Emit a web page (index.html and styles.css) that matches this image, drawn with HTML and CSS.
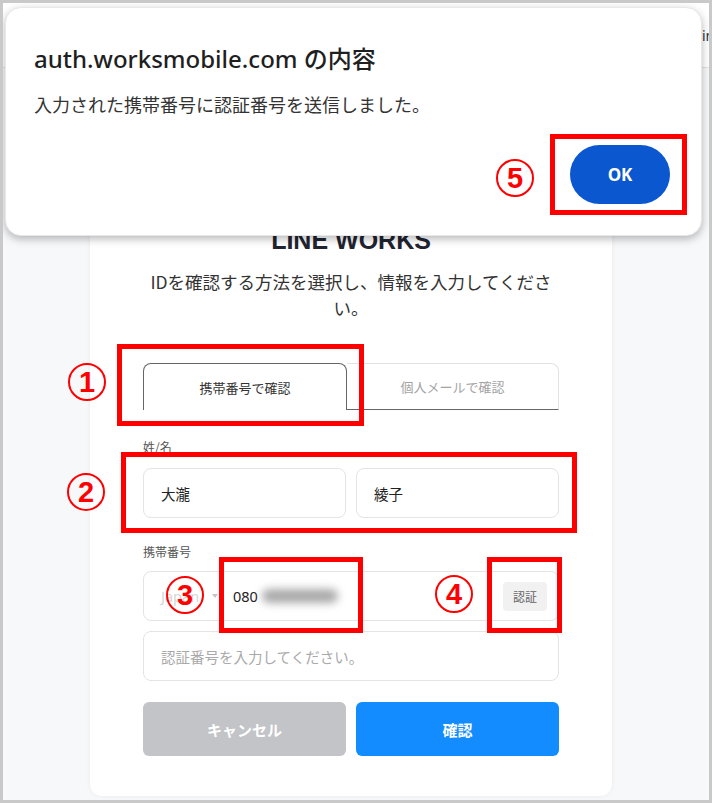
FILE: index.html
```html
<!DOCTYPE html>
<html lang="ja">

<head>
    <meta charset="UTF-8">
    <meta name="viewport" content="width=device-width, initial-scale=1.0">
    <title>LINE WORKS - ID確認</title>
    <link rel="stylesheet" href="styles.css">
</head>

<body>
    <div class="frame">
        <header class="topbar">
            <span class="topbar-link">information</span>
        </header>

        <main class="main">
            <section class="card">
                <h1 class="logo">LINE WORKS</h1>
                <p class="lead">IDを確認する方法を選択し、情報を入力してください。</p>

                <div class="tabs">
                    <button class="tab tab-active">携帯番号で確認</button>
                    <button class="tab">個人メールで確認</button>
                </div>

                <div class="field field-name">
                    <div class="field-label">姓/名</div>
                    <div class="row">
                        <div class="input">大瀧</div>
                        <div class="input">綾子</div>
                    </div>
                </div>

                <div class="field field-phone">
                    <div class="field-label">携帯番号</div>
                    <div class="input phone">
                        <span class="country">Japan<span class="caret"></span></span>
                        <span class="number">080<span class="blur"></span></span>
                        <span class="verify-btn">認証</span>
                    </div>
                    <div class="input placeholder">認証番号を入力してください。</div>
                </div>

                <div class="actions">
                    <button class="btn btn-cancel">キャンセル</button>
                    <button class="btn btn-primary">確認</button>
                </div>
            </section>
        </main>

        <!-- ブラウザのアラート -->
        <div class="dialog">
            <div class="dialog-title">auth.worksmobile.com の内容</div>
            <div class="dialog-msg">入力された携帯番号に認証番号を送信しました。</div>
            <div class="dialog-foot">
                <button class="ok-btn">OK</button>
            </div>
        </div>

        <!-- 注釈 -->
        <div class="mark mark-1">1</div>
        <div class="mark mark-2">2</div>
        <div class="mark mark-3">3</div>
        <div class="mark mark-4">4</div>
        <div class="mark mark-5">5</div>
        <div class="box box-1"></div>
        <div class="box box-2"></div>
        <div class="box box-3"></div>
        <div class="box box-4"></div>
        <div class="box box-5"></div>
    </div>
</body>

</html>
```

FILE: styles.css
```css
body {
    margin: 0;
    font-family: "Noto Sans", "Noto Sans CJK JP", sans-serif;
}

.frame {
    position: relative;
    width: 712px;
    height: 803px;
    box-sizing: border-box;
    border: 3px solid #c9c9c9;
    background: #f7f8fa;
    overflow: hidden;
}

.topbar {
    display: flex;
    justify-content: flex-end;
    align-items: center;
    height: 64px;
    background: #fff;
    border-bottom: 1px solid #e3e3e3;
}

.topbar-link {
    width: 60px;
    margin-right: -53px;
    font-size: 14px;
    color: #333;
}

.main {
    display: flex;
    justify-content: center;
    padding-right: 10px;
}

.card {
    width: 522px;
    box-sizing: border-box;
    margin-top: 109px;
    padding: 48px 53px 40px;
    background: #fff;
    border-radius: 12px;
    box-shadow: 0 0 5px rgba(0, 0, 0, 0.06);
}

.logo {
    margin: 0;
    font-family: "Liberation Sans", sans-serif;
    font-size: 25px;
    line-height: 30px;
    font-weight: bold;
    color: #1f2430;
    text-align: center;
}

.lead {
    margin: 14px 0 0;
    font-family: "Noto Sans CJK JP", sans-serif;
    font-size: 17.5px;
    line-height: 26px;
    color: #333;
    text-align: center;
}

.tabs {
    display: grid;
    grid-template-columns: 204px 1fr;
    margin-top: 42px;
}

.tab {
    height: 47px;
    box-sizing: border-box;
    border: 1px solid #e2e2e2;
    border-left: none;
    border-bottom: 1px solid #666;
    border-radius: 0 8px 0 0;
    background: #fff;
    font-family: "Noto Sans CJK JP", sans-serif;
    font-size: 13px;
    color: #a3a3a3;
    padding: 0;
}

.tab-active {
    border: 1px solid #666;
    border-bottom: none;
    border-radius: 8px 8px 0 0;
    color: #333;
}

.field-name {
    margin-top: 28px;
}

.field-phone {
    margin-top: 25px;
}

.field-label {
    font-family: "Noto Sans CJK JP", sans-serif;
    font-size: 12px;
    line-height: 18px;
    color: #555;
}

.field-name .field-label {
    margin-bottom: 12px;
}

.field-phone .field-label {
    margin-bottom: 10px;
}

.row {
    display: grid;
    grid-template-columns: 1fr 1fr;
    gap: 10px;
}

.input {
    display: flex;
    align-items: center;
    height: 50px;
    box-sizing: border-box;
    padding: 0 17px;
    border: 1px solid #e4e4e6;
    border-radius: 8px;
    font-family: "Noto Sans", "Noto Sans CJK JP", sans-serif;
    font-size: 14.5px;
    color: #222;
}

.phone {
    padding-right: 11px;
}

.country {
    display: flex;
    align-items: center;
    width: 72px;
    color: #d6d6d6;
}

.caret {
    width: 0;
    height: 0;
    margin-left: 13px;
    border-left: 3px solid transparent;
    border-right: 3px solid transparent;
    border-top: 4px solid #c4c4c4;
}

.number {
    display: flex;
    align-items: center;
}

.blur {
    display: inline-block;
    width: 76px;
    height: 14px;
    margin-left: 4px;
    background: #a9a9a9;
    border-radius: 7px;
    filter: blur(4px);
}

.verify-btn {
    margin-left: auto;
    width: 44px;
    height: 29px;
    line-height: 29px;
    text-align: center;
    background: #f1f1f2;
    border-radius: 4px;
    font-family: "Noto Sans CJK JP", sans-serif;
    font-size: 12px;
    color: #666;
}

.placeholder {
    margin-top: 10px;
    font-family: "Noto Sans CJK JP", sans-serif;
    color: #a9a9a9;
}

.actions {
    display: grid;
    grid-template-columns: 1fr 1fr;
    gap: 10px;
    margin-top: 21px;
}

.btn {
    height: 54px;
    border: none;
    border-radius: 6px;
    font-family: "Noto Sans CJK JP", sans-serif;
    font-size: 15px;
    font-weight: bold;
    color: #fff;
}

.btn-cancel {
    background: #c2c4c8;
}

.btn-primary {
    background: #128cff;
}

/* アラート */
.dialog {
    position: absolute;
    left: 2px;
    top: 4px;
    width: 697px;
    height: 229px;
    box-sizing: border-box;
    padding: 35px 31px 0 28px;
    background: #fff;
    border: 1px solid #e8e8e8;
    border-radius: 16px;
    box-shadow: 0 3px 9px rgba(0, 0, 0, 0.28);
}

.dialog-title {
    font-family: "Noto Sans", "Noto Sans CJK JP", sans-serif;
    font-size: 24px;
    line-height: 32px;
    font-weight: 500;
    color: #1f1f1f;
}

.dialog-msg {
    margin-top: 16px;
    font-family: "Noto Sans CJK JP", sans-serif;
    font-size: 18px;
    line-height: 26px;
    color: #333;
}

.dialog-foot {
    display: flex;
    justify-content: flex-end;
    margin-top: 28px;
}

.ok-btn {
    width: 100px;
    height: 59px;
    border: none;
    border-radius: 30px;
    background: #0b57d0;
    color: #fff;
    font-family: "Noto Sans", sans-serif;
    font-size: 17px;
    font-weight: bold;
}

/* 注釈 */
.mark {
    position: absolute;
    width: 38px;
    height: 38px;
    box-sizing: border-box;
    border: 2px solid #ff0000;
    border-radius: 50%;
    color: #ff0000;
    font-family: "Liberation Sans", sans-serif;
    font-size: 29px;
    font-weight: bold;
    line-height: 34px;
    text-align: center;
}

.mark-1 { left: 65px; top: 360px; }
.mark-2 { left: 64px; top: 470px; }
.mark-3 { left: 163px; top: 573px; }
.mark-4 { left: 432px; top: 572px; }
.mark-5 { left: 493px; top: 156px; }

.box {
    position: absolute;
    box-sizing: border-box;
    border: 5px solid #ff0000;
}

.box-1 { left: 114px; top: 341px; width: 247px; height: 82px; }
.box-2 { left: 118px; top: 449px; width: 456px; height: 81px; }
.box-3 { left: 216px; top: 554px; width: 144px; height: 76px; }
.box-4 { left: 484px; top: 554px; width: 75px; height: 76px; }
.box-5 { left: 547px; top: 131px; width: 137px; height: 81px; }
```
